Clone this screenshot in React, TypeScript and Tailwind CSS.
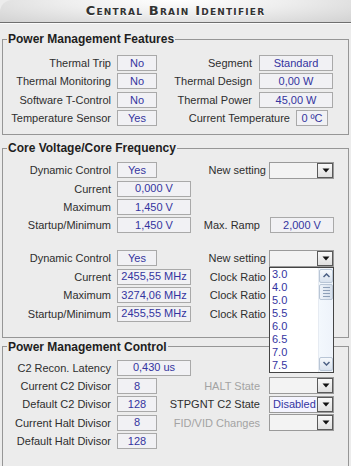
import React from "react";

const FONT = { fontFamily: '"Liberation Sans", Arial, sans-serif' };

function Label({ w, children, gray }: { w: number; children: React.ReactNode; gray?: boolean }) {
  return (
    <div
      className={`shrink-0 text-right whitespace-nowrap text-[11px] leading-[16px] ${gray ? "text-[#a3a3a3]" : "text-[#2e2e2e]"}`}
      style={{ width: w }}
    >
      {children}
    </div>
  );
}

function Val({ w, children, ml }: { w: number; children: React.ReactNode; ml: number }) {
  return (
    <div
      className="shrink-0 h-[16px] border border-[#a9a9a9] bg-[#f1f1f4] flex items-center justify-center overflow-hidden whitespace-nowrap text-[11px] text-[#34349f]"
      style={{ width: w, marginLeft: ml }}
    >
      {children}
    </div>
  );
}

function Arrow() {
  return (
    <div className="w-[16px] h-full border-l border-[#8a8a8a] bg-[linear-gradient(#fbfbfb,#dedede)] flex items-center justify-center outline outline-1 outline-[#5a5a5a] -outline-offset-1">
      <svg width="8" height="5" viewBox="0 0 8 5">
        <polygon points="0.5,0.5 7.5,0.5 4,4.5" fill="#111" />
      </svg>
    </div>
  );
}

function Drop({ ml, value, children }: { ml: number; value?: string; children?: React.ReactNode }) {
  return (
    <div className="relative shrink-0 w-[65px] h-[17px]" style={{ marginLeft: ml }}>
      <div className="w-full h-full border border-[#9a9a9a] bg-[#f3f3f3] flex">
        <div className="flex-1 flex items-center pl-[3px] text-[11px] text-[#34349f] overflow-hidden whitespace-nowrap">
          {value ? <span className="bg-[#f4f4ff]">{value}</span> : null}
        </div>
        <Arrow />
      </div>
      {children}
    </div>
  );
}

function Popup() {
  const items = ["3.0", "4.0", "5.0", "5.5", "6.0", "6.5", "7.0", "7.5"];
  return (
    <div className="absolute left-0 top-full w-[65px] h-[106px] border border-[#444] bg-white flex z-10">
      <div className="flex-1 flex flex-col">
        {items.map((it) => (
          <div key={it} className="h-[13px] leading-[13px] pl-[2px] text-[11px] text-[#34349f]">
            {it}
          </div>
        ))}
      </div>
      <div className="w-[15px] h-full bg-[linear-gradient(90deg,#f3f8fd,#eef3fa)] flex flex-col items-center justify-between py-[1px] border-l border-[#e6ebf2]">
        <div className="w-[14px] h-[14px] rounded-[2px] border border-[#b9c6d6] bg-[linear-gradient(#f6f9fc,#d9e2ee)] flex items-center justify-center">
          <svg width="7" height="5" viewBox="0 0 7 5">
            <polyline points="0.5,4 3.5,1 6.5,4" fill="none" stroke="#4d6185" strokeWidth="1.5" />
          </svg>
        </div>
        <div className="w-[14px] h-[16px] mt-[1px] rounded-[2px] border border-[#b9c6d6] bg-[linear-gradient(90deg,#eef3f9,#d6dfeb)] flex flex-col items-center justify-center gap-[2px]">
          <div className="w-[7px] h-px bg-[#8ea0b8]" />
          <div className="w-[7px] h-px bg-[#8ea0b8]" />
          <div className="w-[7px] h-px bg-[#8ea0b8]" />
          <div className="w-[7px] h-px bg-[#8ea0b8]" />
        </div>
        <div className="flex-1" />
        <div className="w-[14px] h-[14px] rounded-[2px] border border-[#b9c6d6] bg-[linear-gradient(#f6f9fc,#d9e2ee)] flex items-center justify-center">
          <svg width="7" height="5" viewBox="0 0 7 5">
            <polyline points="0.5,1 3.5,4 6.5,1" fill="none" stroke="#4d6185" strokeWidth="1.5" />
          </svg>
        </div>
      </div>
    </div>
  );
}

function Group({ title, children, className }: { title: string; children: React.ReactNode; className?: string }) {
  return (
    <fieldset className={`ml-[2px] w-[347px] border border-[#969696] ${className ?? ""}`}>
      <legend className="ml-[4px] px-[1px] text-[12px] leading-[14px] font-bold text-[#1e1e1e]">{title}</legend>
      {children}
    </fieldset>
  );
}

const Row = ({ children, className }: { children: React.ReactNode; className?: string }) => (
  <div className={`flex items-center h-[16px] ${className ?? ""}`}>{children}</div>
);

export default function App() {
  return (
    <div className="w-[351px] h-[466px] bg-[#ececec] overflow-hidden" style={FONT}>
      <div className="h-[23px] border-b border-[#6f6f6f] rounded-tl-[12px] bg-[radial-gradient(ellipse_at_50%_0%,#ffffff_0%,#eeeeee_45%,#d2d2d2_100%)] flex items-center justify-center">
        <span
          className="text-[13px] font-bold text-[#333] tracking-[1.2px] [text-shadow:0_1px_0_#ffffff]"
          style={{ fontVariant: "small-caps", fontFamily: '"DejaVu Sans", sans-serif' }}
        >
          Central Brain Identifier
        </span>
      </div>
      <div className="h-px bg-[#fafafa]" />

      <Group title="Power Management Features" className="mt-[8px] pt-[9px] pb-[8px]">
        <div className="flex flex-col gap-[2.4px]">
          <Row>
            <Label w={108}>Thermal Trip</Label>
            <Val w={40} ml={6}>No</Val>
            <Label w={95}>Segment</Label>
            <Val w={74} ml={7}>Standard</Val>
          </Row>
          <Row>
            <Label w={108}>Thermal Monitoring</Label>
            <Val w={40} ml={6}>No</Val>
            <Label w={95}>Thermal Design</Label>
            <Val w={74} ml={7}>0,00 W</Val>
          </Row>
          <Row>
            <Label w={108}>Software T-Control</Label>
            <Val w={40} ml={6}>No</Val>
            <Label w={95}>Thermal Power</Label>
            <Val w={74} ml={7}>45,00 W</Val>
          </Row>
          <Row>
            <Label w={108}>Temperature Sensor</Label>
            <Val w={40} ml={6}>Yes</Val>
            <Label w={133}>Current Temperature</Label>
            <Val w={32} ml={6}>0 ºC</Val>
          </Row>
        </div>
      </Group>

      <Group title="Core Voltage/Core Frequency" className="mt-[6px] pt-[7px] pb-[15px]">
        <div className="flex flex-col gap-[2.4px]">
          <Row>
            <Label w={108}>Dynamic Control</Label>
            <Val w={40} ml={6}>Yes</Val>
            <Label w={109}>New setting</Label>
            <Drop ml={3} />
          </Row>
          <Row>
            <Label w={108}>Current</Label>
            <Val w={74} ml={6}>0,000 V</Val>
          </Row>
          <Row>
            <Label w={108}>Maximum</Label>
            <Val w={74} ml={6}>1,450 V</Val>
          </Row>
          <Row>
            <Label w={108}>Startup/Minimum</Label>
            <Val w={74} ml={6}>1,450 V</Val>
            <Label w={69}>Max. Ramp</Label>
            <Val w={64} ml={10}>2,000 V</Val>
          </Row>
          <Row className="mt-[14.6px]">
            <Label w={108}>Dynamic Control</Label>
            <Val w={40} ml={6}>Yes</Val>
            <Label w={109}>New setting</Label>
            <Drop ml={3}>
              <Popup />
            </Drop>
          </Row>
          <Row>
            <Label w={108}>Current</Label>
            <Val w={74} ml={6}>2455,55 MHz</Val>
            <Label w={75}>Clock Ratio</Label>
          </Row>
          <Row>
            <Label w={108}>Maximum</Label>
            <Val w={74} ml={6}>3274,06 MHz</Val>
            <Label w={75}>Clock Ratio</Label>
          </Row>
          <Row>
            <Label w={108}>Startup/Minimum</Label>
            <Val w={74} ml={6}>2455,55 MHz</Val>
            <Label w={75}>Clock Ratio</Label>
          </Row>
        </div>
      </Group>

      <Group title="Power Management Control" className="mt-[2px] pt-[6px] pb-[20px]">
        <div className="flex flex-col gap-[2.4px]">
          <Row>
            <Label w={108}>C2 Recon. Latency</Label>
            <Val w={74} ml={6}>0,430 us</Val>
          </Row>
          <Row>
            <Label w={108}>Current C2 Divisor</Label>
            <Val w={40} ml={6}>8</Val>
            <Label w={103} gray>HALT State</Label>
            <Drop ml={9} />
          </Row>
          <Row>
            <Label w={108}>Default C2 Divisor</Label>
            <Val w={40} ml={6}>128</Val>
            <Label w={103}>STPGNT C2 State</Label>
            <Drop ml={9} value="Disabled" />
          </Row>
          <Row>
            <Label w={108}>Current Halt Divisor</Label>
            <Val w={40} ml={6}>8</Val>
            <Label w={103} gray>FID/VID Changes</Label>
            <Drop ml={9} />
          </Row>
          <Row>
            <Label w={108}>Default Halt Divisor</Label>
            <Val w={40} ml={6}>128</Val>
          </Row>
        </div>
      </Group>
    </div>
  );
}
